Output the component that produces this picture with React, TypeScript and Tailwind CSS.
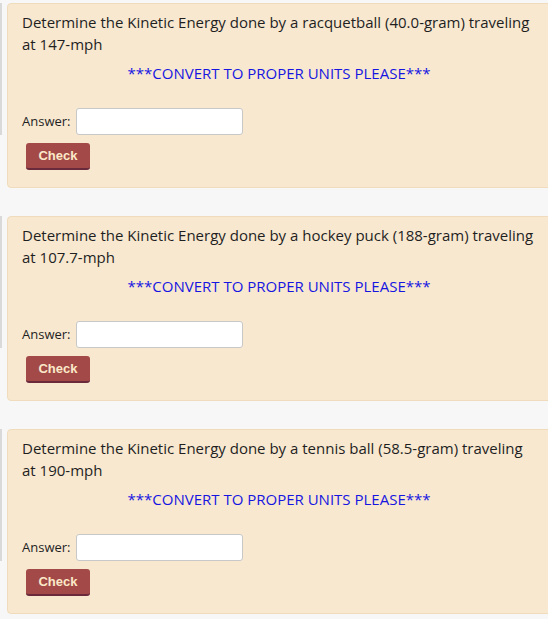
const questions = [
  { id: 'q1', text: 'Determine the Kinetic Energy done by a racquetball (40.0-gram) traveling at 147-mph' },
  { id: 'q2', text: 'Determine the Kinetic Energy done by a hockey puck (188-gram) traveling at 107.7-mph' },
  { id: 'q3', text: 'Determine the Kinetic Energy done by a tennis ball (58.5-gram) traveling at 190-mph' },
]

function Question({ text }: { text: string }) {
  return (
    <div className="flex">
      <div className="w-[7px] shrink-0">
        <div className="h-[132px] w-[2px] bg-[#d9d9d9]" />
      </div>
      <div className="w-[560px] h-[185px] shrink-0 rounded-[4px] border border-[#f0dcbc] bg-[#f8e8d0] px-[14px] pt-[7px] pb-[17px]">
        <div className="text-[15px] leading-[22px] text-[#1f1f1f] pr-[14px]">{text}</div>
        <div className="mt-[7px] text-center text-[15px] leading-[22px] text-[#1616e0] pr-[16px]">
          ***CONVERT TO PROPER UNITS PLEASE***
        </div>
        <div className="mt-[24px] flex items-center gap-[5px]">
          <label className="text-[13px] text-[#1f1f1f]">Answer:</label>
          <input type="text" className="h-[27px] w-[167px] rounded-[3px] border border-[#c8c8c8] bg-white outline-none" />
        </div>
        <button className="mt-[8px] ml-[4px] h-[27px] w-[64px] rounded-[3px] border-b-2 border-[#6b2a3c] bg-[#a34a48] text-[13px] font-bold text-[#fbe9c8] [font-family:'Liberation_Sans',Arial,sans-serif]">
          Check
        </button>
      </div>
    </div>
  )
}

export default function App() {
  return (
    <div className="w-[548px] h-[619px] overflow-hidden bg-[#f7f7f7] pt-[3px] [font-family:'Open_Sans',sans-serif]">
      <div className="flex flex-col gap-[28px]">
        {questions.map(q => <Question key={q.id} text={q.text} />)}
      </div>
    </div>
  )
}
